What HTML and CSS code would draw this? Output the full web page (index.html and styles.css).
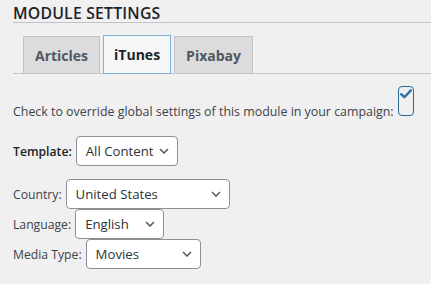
FILE: index.html
```html
<!DOCTYPE html>
<html>
<head>
<meta charset="utf-8">
<link rel="stylesheet" href="styles.css">
</head>
<body>
<div class="page">
  <h2 class="title">MODULE SETTINGS</h2>
  <div class="tabs">
    <div class="tab">Articles</div>
    <div class="tab tab-active">iTunes</div>
    <div class="tab">Pixabay</div>
  </div>
  <div class="override">Check to override global settings of this module in your campaign: <span class="checkbox"><svg class="check" width="12" height="10" viewBox="0 0 12 10"><path d="M1.2 5.2 L4.4 8.2 L10.8 1.4" fill="none" stroke="#2271b1" stroke-width="2.4" stroke-linecap="round" stroke-linejoin="round"/></svg></span></div>
  <div class="row row-template">
    <span class="label label-bold">Template:</span>
    <div class="select sel-template"><span>All Content</span><svg class="chev" width="10" height="6" viewBox="0 0 10 6"><path d="M1 1 L5 5 L9 1" fill="none" stroke="#50575e" stroke-width="1.5"/></svg></div>
  </div>
  <div class="group">
    <div class="row">
      <span class="label">Country:</span>
      <div class="select sel-country"><span>United States</span><svg class="chev" width="10" height="6" viewBox="0 0 10 6"><path d="M1 1 L5 5 L9 1" fill="none" stroke="#50575e" stroke-width="1.5"/></svg></div>
    </div>
    <div class="row">
      <span class="label">Language:</span>
      <div class="select sel-language"><span>English</span><svg class="chev" width="10" height="6" viewBox="0 0 10 6"><path d="M1 1 L5 5 L9 1" fill="none" stroke="#50575e" stroke-width="1.5"/></svg></div>
    </div>
    <div class="row">
      <span class="label">Media Type:</span>
      <div class="select sel-media"><span>Movies</span><svg class="chev" width="10" height="6" viewBox="0 0 10 6"><path d="M1 1 L5 5 L9 1" fill="none" stroke="#50575e" stroke-width="1.5"/></svg></div>
    </div>
  </div>
</div>
</body>
</html>
```

FILE: styles.css
```css
html, body {
  margin: 0;
  padding: 0;
  background: #f0f0f1;
}
body {
  font-family: "Open Sans", "Noto Sans", sans-serif;
  color: #3c434a;
  width: 431px;
  height: 284px;
  overflow: hidden;
}
.page {
  padding-left: 13px;
}
.title {
  margin: 0;
  padding-top: 5px;
  font-size: 15.8px;
  line-height: 17px;
  font-weight: 600;
  letter-spacing: 0.2px;
  color: #1d2327;
  border-bottom: 1px solid #c3c4c7;
}
.tabs {
  margin-top: 13px;
  padding-left: 10px;
  display: flex;
  align-items: flex-end;
  gap: 3px;
  border-bottom: 1px solid #c3c4c7;
  height: 37px;
}
.tab {
  box-sizing: border-box;
  height: 37px;
  padding: 0 11px;
  display: flex;
  align-items: center;
  background: #dcdcde;
  border: 1px solid #c3c4c7;
  border-bottom: none;
  font-size: 14px;
  font-weight: 700;
  color: #50575e;
}
.tab-active {
  height: 39px;
  margin-bottom: -1px;
  background: #f6f7f7;
  border: 1px solid #7fb0d9;
  color: #1d2327;
  padding: 0 10px;
}
.override {
  margin-top: 12px;
  font-size: 12.4px;
  color: #3c434a;
}
.checkbox {
  display: inline-block;
  box-sizing: border-box;
  width: 16px;
  height: 30px;
  margin-left: 1px;
  border: 1px solid #2b6a94;
  border-radius: 4px;
  background: #f0f0f1;
  vertical-align: baseline;
  position: relative;
}
.check {
  position: absolute;
  left: 1px;
  top: 2px;
}
.row {
  display: flex;
  align-items: center;
  gap: 4px;
  font-size: 12.2px;
}
.row-template {
  margin-top: 16px;
}
.group {
  margin-top: 13px;
}
.label {
  color: #3c434a;
}
.label-bold {
  font-weight: 600;
  color: #1d2327;
}
.select {
  box-sizing: border-box;
  height: 30px;
  display: flex;
  align-items: center;
  justify-content: space-between;
  padding: 0 8px 0 9px;
  background: #fff;
  border: 1px solid #8c8f94;
  border-radius: 4px;
  font-size: 13.2px;
  color: #2c3338;
}
.chev {
  flex: none;
}
.sel-template { width: 102px; }
.sel-country { width: 164px; }
.sel-language { width: 89px; }
.sel-media { width: 115px; }
```
